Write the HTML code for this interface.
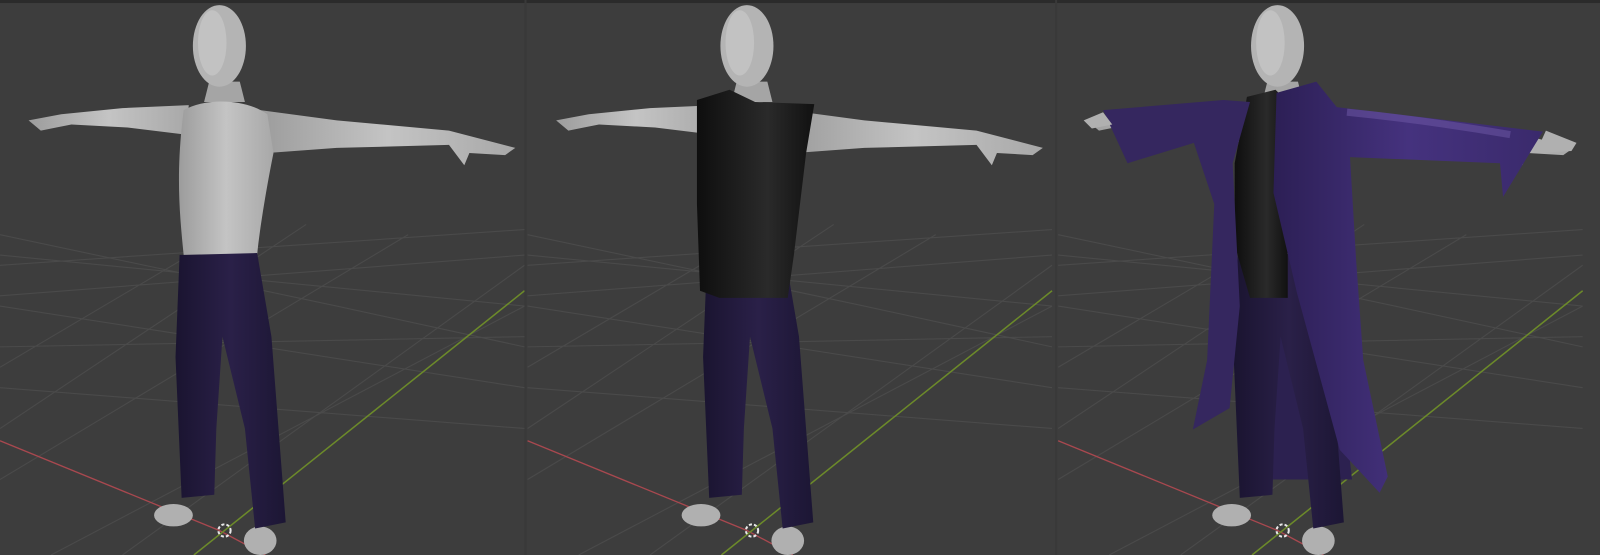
<!DOCTYPE html>
<html><head><meta charset="utf-8"><style>
html,body{margin:0;padding:0;background:#3d3d3d;width:1600px;height:555px;overflow:hidden}
svg{display:block}
</style></head><body>
<svg width="1600" height="555" viewBox="0 0 1568 544" preserveAspectRatio="none">
<defs>
<linearGradient id="skin" x1="0" x2="1"><stop offset="0" stop-color="#9c9c9c"/><stop offset=".5" stop-color="#c4c4c4"/><stop offset="1" stop-color="#a8a8a8"/></linearGradient>
<linearGradient id="pant" x1="0" x2="1"><stop offset="0" stop-color="#1a1430"/><stop offset=".5" stop-color="#2a2048"/><stop offset="1" stop-color="#1c1634"/></linearGradient>
<linearGradient id="coat" x1="0" x2="1"><stop offset="0" stop-color="#2c1f55"/><stop offset=".5" stop-color="#45327e"/><stop offset="1" stop-color="#3a2a6c"/></linearGradient>
<linearGradient id="shirt" x1="0" x2="1"><stop offset="0" stop-color="#0e0e0e"/><stop offset=".6" stop-color="#2a2a2a"/><stop offset="1" stop-color="#111"/></linearGradient>
<g id="grid" stroke="#4a4a4a" stroke-width="1.1" fill="none">
<path d="M0,290 L514,250 M0,340 L514,330 M0,260 L514,225 M0,380 L514,420 M0,250 L514,300 M0,300 L514,380 M0,230 L330,300 L514,340 M120,544 L514,260 M0,470 L400,230 M0,420 L300,220 M0,360 L220,230 M50,544 L514,300"/>
<path d="M0,432 L215,520 L260,544" stroke="#a8484f" stroke-width="1.3"/>
<path d="M190,544 L514,285" stroke="#6c8a2a" stroke-width="1.5"/>
</g>
<g id="fig">
<path d="M185,103 L120,106 L60,112 L28,118 L40,128 L70,122 L125,125 L182,132 Z" fill="url(#skin)"/>
<path d="M255,108 L330,118 L440,128 L505,145 L495,152 L460,150 L455,162 L440,142 L330,145 L262,150 Z" fill="url(#skin)"/>
<path d="M205,80 L235,80 L240,100 L200,100 Z" fill="#a5a5a5"/>
<path d="M180,108 C200,96 240,96 262,112 L268,150 C262,180 255,220 252,250 L180,250 C176,210 172,170 180,108 Z" fill="url(#skin)"/>
<ellipse cx="215" cy="45" rx="26" ry="40" fill="#b4b4b4"/>
<ellipse cx="208" cy="42" rx="14" ry="32" fill="#c2c2c2"/>
<ellipse cx="170" cy="505" rx="19" ry="11" fill="#b0b0b0"/>
<ellipse cx="255" cy="530" rx="16" ry="14" fill="#b0b0b0"/>
<path d="M176,250 L252,248 L266,330 L280,512 L250,518 L240,420 L218,330 L212,420 L210,485 L178,488 L172,350 Z" fill="url(#pant)"/>
<circle cx="220" cy="520" r="6" fill="none" stroke="#e8e8e8" stroke-width="2" stroke-dasharray="3 2"/>
</g>
</defs>
<rect width="1568" height="544" fill="#3d3d3d"/>
<rect x="0" y="0" width="1568" height="3" fill="#2b2b2b"/>
<use href="#grid"/>
<use href="#grid" transform="translate(517,0)"/>
<use href="#grid" transform="translate(1037,0)"/>
<rect x="514" y="0" width="2" height="544" fill="#393939"/>
<rect x="1034" y="0" width="2" height="544" fill="#393939"/>
<use href="#fig"/>
<use href="#fig" transform="translate(517,0)"/>
<path d="M683,98 L715,88 L740,100 L798,102 L790,150 L778,250 L772,292 L705,292 L686,285 L683,200 Z" fill="url(#shirt)"/>
<path d="M1230,250 L1300,250 L1325,470 L1245,470 Z" fill="#2c2150"/>
<use href="#fig" transform="translate(1037,0)"/>
<path d="M1222,95 L1250,88 L1262,100 L1262,200 L1262,292 L1225,292 L1210,240 L1210,160 Z" fill="url(#shirt)"/>
<path d="M1199,98 L1081,108 L1105,160 L1170,140 L1190,200 L1183,353 L1169,421 L1205,400 L1215,300 L1208,160 L1225,100 Z" fill="#35275f"/>
<path d="M1251,91 L1290,80 L1310,105 L1512,129 L1473,193 L1470,160 L1323,154 L1329,255 L1336,353 L1360,467 L1352,483 L1313,441 L1271,287 L1248,189 Z" fill="url(#coat)"/>
<path d="M1320,110 Q1400,118 1480,132" stroke="#6f5aa8" stroke-width="7" fill="none" opacity=".5"/>
<path d="M1515,128 L1545,140 L1540,148 L1505,150 Z" fill="#b0b0b0"/>
<path d="M1081,110 L1062,118 L1070,126 L1090,122 Z" fill="#b0b0b0"/>
</svg>
</body></html>
